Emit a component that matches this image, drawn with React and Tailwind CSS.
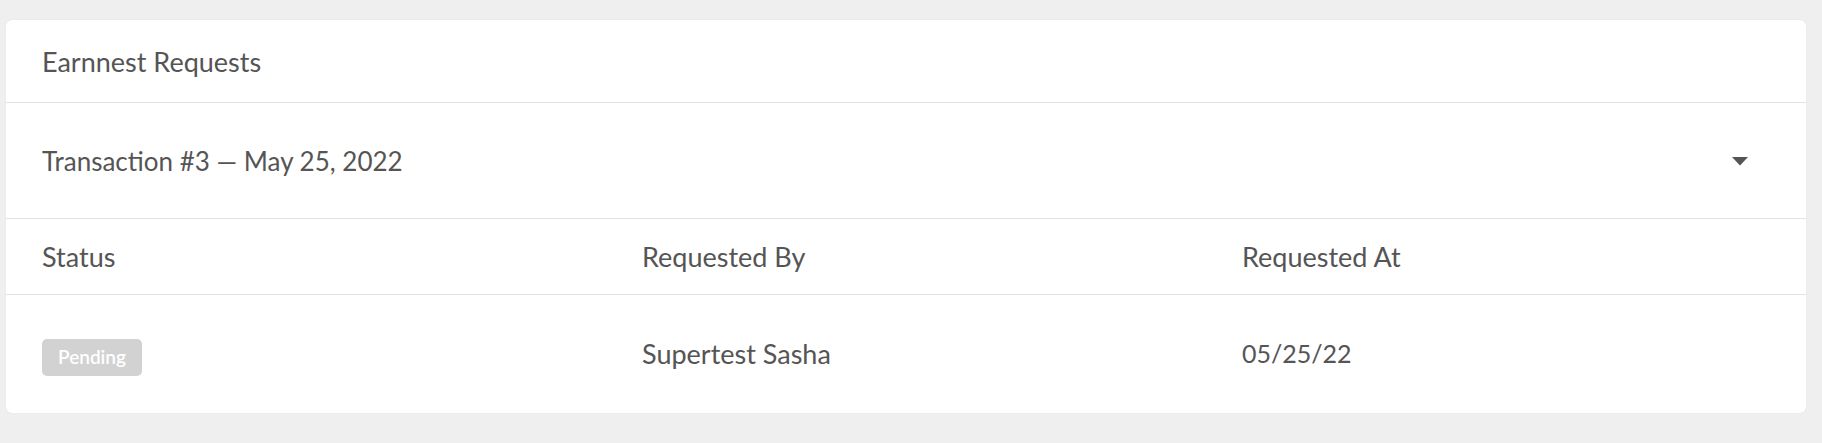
import React from 'react';

const columns = ['Status', 'Requested By', 'Requested At'];

const rows = [{ status: 'Pending', requestedBy: 'Supertest Sasha', requestedAt: '05/25/22' }];

const StatusBadge = ({ label }) => (
  <span className="inline-flex h-[37px] w-[100px] items-center justify-center rounded-[5px] bg-[#d2d2d2] text-[19px] font-semibold text-white">
    {label}
  </span>
);

const App = () => {
  return (
    <div
      className="min-h-[443px] w-full bg-[#efefef] pb-[31px] pl-[6px] pr-[16px] pt-[20px] text-[#555]"
      style={{ fontFamily: 'Lato, "Noto Sans", sans-serif' }}
    >
      <div className="overflow-hidden rounded-[6px] bg-white shadow-[0_0_1px_rgba(0,0,0,0.12)]">
        <div className="flex h-[83px] items-center border-b border-[#e2e2e2] px-[36px] pt-[2px] text-[27px]">
          Earnnest Requests
        </div>

        <div className="flex h-[116px] items-center justify-between border-b border-[#e2e2e2] pl-[36px] pr-[58px] text-[26px]">
          <span className="pt-[2px]">Transaction #3 — May 25, 2022</span>
          <svg width="16" height="9" viewBox="0 0 16 9" className="mt-[1px]">
            <path d="M0 0 L16 0 L8 8.5 Z" fill="#555" />
          </svg>
        </div>

        <table className="w-full table-fixed border-collapse text-[27px]">
          <thead>
            <tr className="h-[75px] border-b border-[#e2e2e2]">
              {columns.map((col) => (
                <th key={col} className="px-[36px] pt-[2px] text-left font-normal">
                  {col}
                </th>
              ))}
            </tr>
          </thead>
          <tbody>
            {rows.map((row) => (
              <tr key={row.requestedBy} className="h-[119px]">
                <td className="px-[36px] pt-[2px]">
                  <StatusBadge label={row.status} />
                </td>
                <td className="px-[36px]">{row.requestedBy}</td>
                <td className="px-[36px] text-[25px]">{row.requestedAt}</td>
              </tr>
            ))}
          </tbody>
        </table>
      </div>
    </div>
  );
};

export default App;
